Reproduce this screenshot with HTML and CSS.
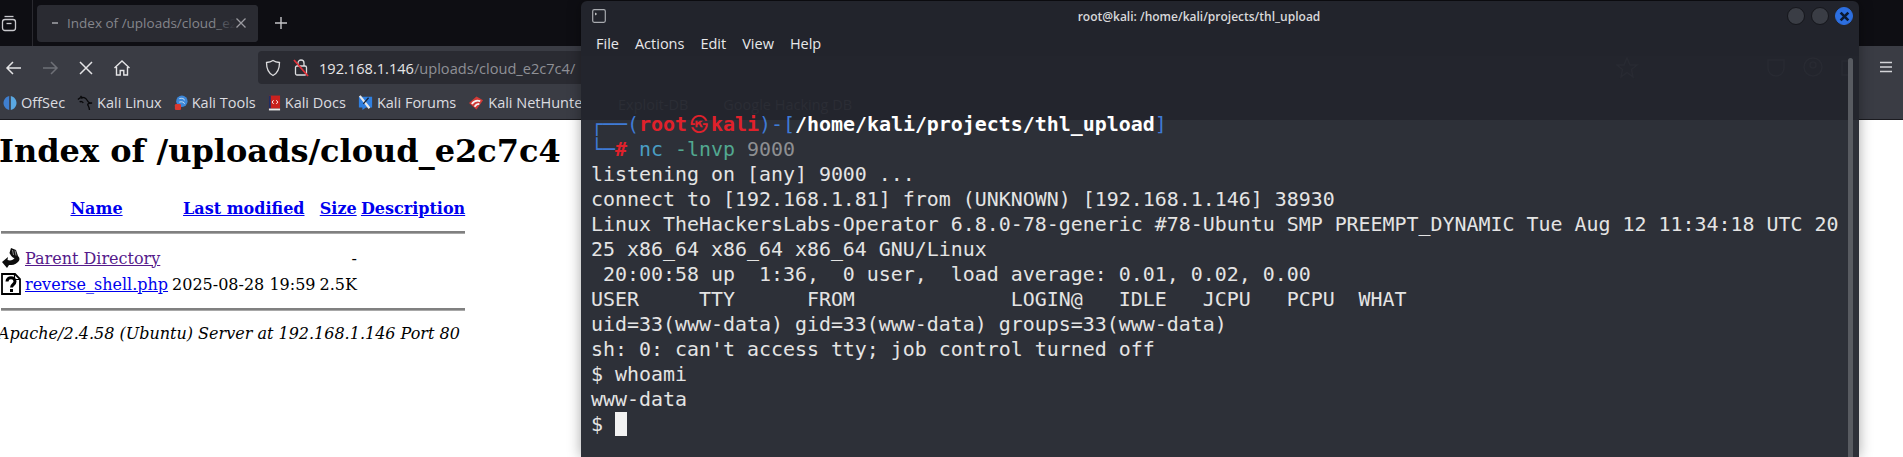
FILE: index.html
```html
<!DOCTYPE html>
<html lang="en">
<head>
<meta charset="utf-8">
<title>Index of /uploads/cloud_e2c7c4</title>
<link rel="stylesheet" href="styles.css">
</head>
<body>
<div class="browser">
  <div class="tabbar">
    <div class="fxview">
      <svg width="16" height="20" viewBox="0 0 16 20" fill="none" stroke="#c9c9cd" stroke-width="1.3"><path d="M3.500 3.500h9"/><rect x="1.500" y="6.500" width="13" height="11" rx="2.500"/><path d="M5.500 10.500h5"/></svg>
    </div>
    <div class="tab">
      <span class="tab-dash"></span>
      <span class="tab-title">Index of /uploads/cloud_e2c7c4</span>
      <span class="tab-fade"></span>
      <svg class="tab-close" width="12" height="12" viewBox="0 0 12 12" stroke="#9b9ba1" stroke-width="1.3"><path d="M1.500 1.500l9 9M10.500 1.500l-9 9"/></svg>
    </div>
    <svg class="newtab" width="14" height="14" viewBox="0 0 14 14" stroke="#c4c4c8" stroke-width="1.4"><path d="M7 1v12M1 7h12"/></svg>
  </div>
  <div class="toolbar">
    <div class="nav">
      <svg width="18" height="18" viewBox="0 0 18 18" fill="none" stroke="#e4e4e6" stroke-width="1.5"><path d="M16 9H2M8 3L2 9l6 6"/></svg>
      <svg width="18" height="18" viewBox="0 0 18 18" fill="none" stroke="#6e7077" stroke-width="1.5"><path d="M2 9h14M10 3l6 6-6 6"/></svg>
      <svg width="18" height="18" viewBox="0 0 18 18" fill="none" stroke="#e4e4e6" stroke-width="1.5"><path d="M3 3l12 12M15 3L3 15"/></svg>
      <svg width="18" height="18" viewBox="0 0 18 18" fill="none" stroke="#e4e4e6" stroke-width="1.4"><path d="M1.500 9L9 2l7.500 7M3.500 8v8h3.700v-4.500h3.600V16h3.700V8"/></svg>
    </div>
    <div class="urlbar">
      <svg width="16" height="18" viewBox="0 0 16 18" fill="none" stroke="#dcdcde" stroke-width="1.3"><path d="M8 1.500c2 1.300 4 1.800 6.500 2 0 6-1.500 10.500-6.500 13-5-2.500-6.500-7-6.500-13 2.500-.2 4.500-.7 6.500-2z"/></svg>
      <svg class="lock" width="16" height="20" viewBox="0 0 16 20" fill="none"><rect x="2.500" y="8" width="11" height="9" rx="1.500" stroke="#dcdcde" stroke-width="1.300"/><path d="M5 8V5a3 3 0 016 0v3" stroke="#dcdcde" stroke-width="1.300"/><path d="M1 2l14 16" stroke="#e0313a" stroke-width="1.800"/></svg>
      <span class="url"><b>192.168.1.146</b>/uploads/cloud_e2c7c4/</span>
    </div>
    <svg class="menu" width="14" height="14" viewBox="0 0 14 14" stroke="#d4d4d8" stroke-width="1.600"><path d="M1 2.500h12M1 7h12M1 11.500h12"/></svg>
  </div>
  <div class="bookmarks">
    <span class="bm"><svg width="14" height="16" viewBox="0 0 14 16"><path d="M6.200 1C2.500 2 .5 5 .5 8s2 6 5.700 7z" fill="#3f7fd0"/><path d="M7.800 1c3.700 1 5.700 4 5.700 7s-2 6-5.700 7z" fill="#5aa8e2"/></svg>OffSec</span>
    <span class="bm"><svg width="16" height="18" viewBox="0 0 18 18" fill="none" stroke="#08080a" stroke-width="1.500"><path d="M1 5c2-2 5-2.500 7-2 3 1 3 3 5 5 1 1 3 1 4 1-3 0-5 0-5 2 1 2 2 3 2 6M4 1l2 3M7 9c-1-2-3-2-4-1"/></svg>Kali Linux</span>
    <span class="bm"><svg width="14" height="18" viewBox="0 0 16 18"><circle cx="9" cy="7" r="6.500" fill="#3d87d8"/><path d="M6 4c3-1 6 0 6 2M6 8c3-1 6 0 6 2" stroke="#cfe4f7" fill="none"/><rect x="1" y="10" width="7" height="7" rx="1.500" fill="#d8382f"/></svg>Kali Tools</span>
    <span class="bm"><svg width="13" height="18" viewBox="0 0 14 18"><rect x="1" y="1" width="12" height="14" fill="#c9211e"/><rect x="1" y="1" width="2" height="14" fill="#1f2f66"/><rect x="1" y="15" width="12" height="2" fill="#e8e8e8"/><path d="M6 6L4.500 8 6 10M9 6l1.500 2L9 10" stroke="#fff" fill="none"/></svg>Kali Docs</span>
    <span class="bm"><svg width="15" height="18" viewBox="0 0 17 18"><path d="M1 2h15v12H9l-4 3v-3H1z" fill="#2f7fe0"/><path d="M2 1l11 14" stroke="#e8e8e8" stroke-width="2.500"/><path d="M12 3L6 10" stroke="#16243a" stroke-width="1.500"/></svg>Kali Forums</span>
    <span class="bm"><svg width="16" height="18" viewBox="0 0 17 18"><path d="M1 9L9 2l7 4-7 10z" fill="#d13a36"/><path d="M4 10c3-4 6-4 9-3M7 13c2-3 3-3 5-3" stroke="#f3f3f3" stroke-width="1.800" fill="none"/></svg>Kali NetHunter</span>
  </div>
  <main class="page">
    <h1>Index of /uploads/cloud_e2c7c4</h1>
    <table class="listing">
      <tr>
        <th class="c-icon"></th>
        <th><a href="#">Name</a></th>
        <th><a href="#">Last modified</a></th>
        <th><a href="#">Size</a></th>
        <th><a href="#">Description</a></th>
      </tr>
      <tr><th colspan="5"><hr></th></tr>
      <tr>
        <td class="c-icon"><svg width="20" height="22" viewBox="0 0 20 22"><path d="M10 1l5 2 2 6c2 2 2 4 0 6-3 3-6 3-9 3l-2 3-5-6 6-5-.5 3c3 1 6 0 7-2-2 0-4-3-5-5z" fill="#0c0c0c"/><path d="M11.500 3l1 5M14 3.500l1 5" stroke="#9a9a9a" stroke-width=".9"/></svg></td>
        <td><a class="visited" href="#">Parent Directory</a></td>
        <td></td>
        <td class="right">-</td>
        <td></td>
      </tr>
      <tr>
        <td class="c-icon"><svg width="20" height="22" viewBox="0 0 20 22"><path d="M1 1h13l5 5v15H1z" fill="#fff" stroke="#000" stroke-width="1.800"/><path d="M13.500 1v5.500H19" fill="none" stroke="#000" stroke-width="1.200"/><path d="M6 8.500C6 3.500 14 3.500 14 8.500c0 3-3.500 3-3.500 6M10.500 16v3" fill="none" stroke="#000" stroke-width="3"/></svg></td>
        <td><a href="#">reverse_shell.php</a></td>
        <td>2025-08-28 19:59</td>
        <td>2.5K</td>
        <td></td>
      </tr>
      <tr><th colspan="5"><hr></th></tr>
    </table>
    <address>Apache/2.4.58 (Ubuntu) Server at 192.168.1.146 Port 80</address>
  </main>
</div>

<section class="terminal">
  <header class="term-title">
    <svg class="term-icon" width="14" height="14" viewBox="0 0 14 14" fill="none"><rect x=".7" y=".7" width="12.600" height="12.600" rx="1.500" stroke="#a9abb0" stroke-width="1.200"/><path d="M3 4l1.500 1L3 6" stroke="#d8d8d8"/></svg>
    <span class="term-name">root@kali: /home/kali/projects/thl_upload</span>
    <div class="wm-buttons">
      <span class="wm-btn"></span>
      <span class="wm-btn"></span>
      <span class="wm-btn wm-close"><svg width="11" height="11" viewBox="0 0 10 10" stroke="#0b1a33" stroke-width="2.400"><path d="M1.500 1.500l7 7M8.500 1.500l-7 7"/></svg></span>
    </div>
  </header>
  <nav class="term-menu">
    <span>File</span><span>Actions</span><span>Edit</span><span>View</span><span>Help</span>
  </nav>
  <div class="term-ghost-top"></div>
  <div class="term-body"><div class="screen"><span class="blue">┌──(</span><b class="red">root<span class="at">㉿</span>kali</b><span class="blue">)-[</span><b class="white">/home/kali/projects/thl_upload</b><span class="blue">]</span>
<span class="blue">└─</span><b class="red">#</b> <span class="cmd">nc</span> <span class="arg">-lnvp</span> <span class="num">9000</span>
listening on [any] 9000 ...
connect to [192.168.1.81] from (UNKNOWN) [192.168.1.146] 38930
Linux TheHackersLabs-Operator 6.8.0-78-generic #78-Ubuntu SMP PREEMPT_DYNAMIC Tue Aug 12 11:34:18 UTC 20
25 x86_64 x86_64 x86_64 GNU/Linux
 20:00:58 up  1:36,  0 user,  load average: 0.01, 0.02, 0.00
USER     TTY      FROM             LOGIN@   IDLE   JCPU   PCPU  WHAT
uid=33(www-data) gid=33(www-data) groups=33(www-data)
sh: 0: can't access tty; job control turned off
$ whoami
www-data
$ <span class="cursor"> </span></div></div>
  <div class="ghost ghost-bm"><span>Exploit-DB</span><span>Google Hacking DB</span></div>
  <svg class="ghost-icons" width="240" height="24" viewBox="0 0 240 24" fill="none" stroke="#282a32" stroke-width="1.500"><path d="M11 2l3 7h7l-5.500 4.500L17 21l-6-4.500L5 21l1.500-7.500L1 9h7z"/><path d="M152 4h16v8a8 8 0 01-16 0z"/><circle cx="197" cy="11" r="9"/><circle cx="197" cy="9" r="3"/><path d="M226 5h8v14h-8z"/></svg>
  <div class="scrollbar"></div>
</section>
</body>
</html>
```
FILE: styles.css
```css
* { box-sizing: border-box; }
html, body { margin: 0; height: 100%; overflow: hidden; }
body { background: #fff; font-family: "DejaVu Serif", serif; }

.browser { display: flex; flex-direction: column; height: 457px; }

.tabbar { height: 46px; background: #0e0e13; display: flex; align-items: center; font-family: "Open Sans", sans-serif; }
.fxview { width: 33px; height: 46px; border-right: 1px solid #2a2a30; display: flex; align-items: center; padding-left: 1px; }
.tab { position: relative; width: 221px; height: 37px; margin-left: 4px; background: #2a2b32; border-radius: 4px; display: flex; align-items: center; padding-left: 15px; color: #85868c; font-size: 13.500px; overflow: hidden; white-space: nowrap; }
.tab-dash { width: 6px; height: 2px; background: #85868c; margin-right: 9px; flex: none; }
.tab-title { flex: none; }
.tab-fade { position: absolute; right: 0; top: 0; bottom: 0; width: 45px; background: linear-gradient(to right, rgba(42,43,50,0), #2a2b32 50%); }
.tab-close { position: absolute; right: 11px; top: 12px; }
.newtab { margin-left: 16px; }

.toolbar { height: 37px; background: #3a3c44; display: flex; align-items: flex-start; position: relative; font-family: "Open Sans", sans-serif; }
.nav { width: 258px; display: flex; gap: 18px; padding: 13px 0 0 5px; }
.urlbar { margin-top: 5px; width: 600px; height: 33px; background: #2a2b32; border-radius: 4px; display: flex; align-items: center; padding-left: 7px; font-size: 14.600px; color: #8f9096; }
.lock { margin-left: 12px; margin-right: 10px; }
.url b { font-weight: 400; color: #e6e6e8; }
.menu { margin-left: auto; margin-right: 10px; margin-top: 14px; }

.bookmarks { height: 37px; background: #3a3c44; border-bottom: 1px solid #1b1b20; display: flex; align-items: center; padding: 3px 0 0 3px; font-family: "Open Sans", sans-serif; font-size: 14.500px; color: #dcdce0; white-space: nowrap; }
.bm { display: inline-flex; align-items: center; gap: 4px; margin-right: 12px; }

.page { flex: 1; background: #fff; color: #000; }
h1 { font-size: 32px; font-weight: 700; line-height: 38px; margin: 0 0 0 -1px; padding: 12px 0 0 0; white-space: nowrap; }
.listing { font-size: 16px; border-spacing: 2px; margin: 26px 0 0 -2px; line-height: 19px; }
.listing th { padding: 1px; }
.listing td { padding: 1px; white-space: nowrap; }
.listing a { color: #0000ee; }
.listing a.visited { color: #551a8b; }
.c-icon { width: 22px; }
.c-icon svg { display: block; }
.right { text-align: right; }
hr { border: none; border-top: 2px solid #808080; border-bottom: 1px solid #a8a8a8; margin: 9px 0; height: 3px; }
address { font-size: 16px; line-height: 19px; margin: 1px 0 0 -2px; }

.terminal { position: absolute; left: 581px; top: 1px; width: 1278px; height: 456px; background: #22242c; border-radius: 6px 6px 0 0; box-shadow: 0 0 14px rgba(0,0,0,.35); display: flex; flex-direction: column; color: #e4e4e4; overflow: hidden; }
.term-title { height: 30px; position: relative; display: flex; align-items: center; justify-content: center; padding-right: 42px; font-family: "Open Sans", sans-serif; font-size: 12px; font-weight: 600; color: #d8d8da; flex: none; }
.term-icon { position: absolute; left: 11px; top: 8px; }
.wm-buttons { position: absolute; right: 6px; top: 6px; display: flex; gap: 6px; }
.wm-btn { width: 18px; height: 18px; border-radius: 50%; background: #3a3d45; border: 1px solid #16171c; display: flex; align-items: center; justify-content: center; }
.wm-close { background: #2d6fe0; border-color: #2d6fe0; }
.term-menu { height: 25px; display: flex; gap: 16px; padding-left: 15px; align-items: center; font-family: "Open Sans", sans-serif; font-size: 14.500px; color: #e8e8ea; flex: none; }
.term-ghost-top { height: 64px; flex: none; background: #23252d; }
.term-body { flex: 1; background: #2d3038; position: relative; }
.screen { position: absolute; left: 10px; right: 0; top: -9px; font-family: "DejaVu Sans Mono", monospace; font-size: 19.930px; line-height: 25px; white-space: pre; }
.blue { color: #3f7bd6; }
.red { color: #e0212b; }
.white { color: #ffffff; }
.at { display: inline-block; width: 24px; text-align: center; font-family: "Noto Sans CJK KR", sans-serif; font-size: 18px; font-weight: 400; }
.cmd { color: #4a9ec4; }
.arg { color: #52a890; }
.num { color: #8d8f92; }
.cursor { display: inline-block; width: 12px; height: 24px; background: #f2f2f2; vertical-align: top; }
.ghost { position: absolute; color: #2b2d35; font-family: "Open Sans", sans-serif; font-size: 14.500px; }
.ghost-bm { left: 37px; top: 94px; display: flex; gap: 35px; }
.ghost-icons { position: absolute; left: 1035px; top: 55px; }
.scrollbar { position: absolute; right: 6px; top: 57px; bottom: 0; width: 5px; background: #585b61; border-radius: 3px 3px 0 0; }
```
